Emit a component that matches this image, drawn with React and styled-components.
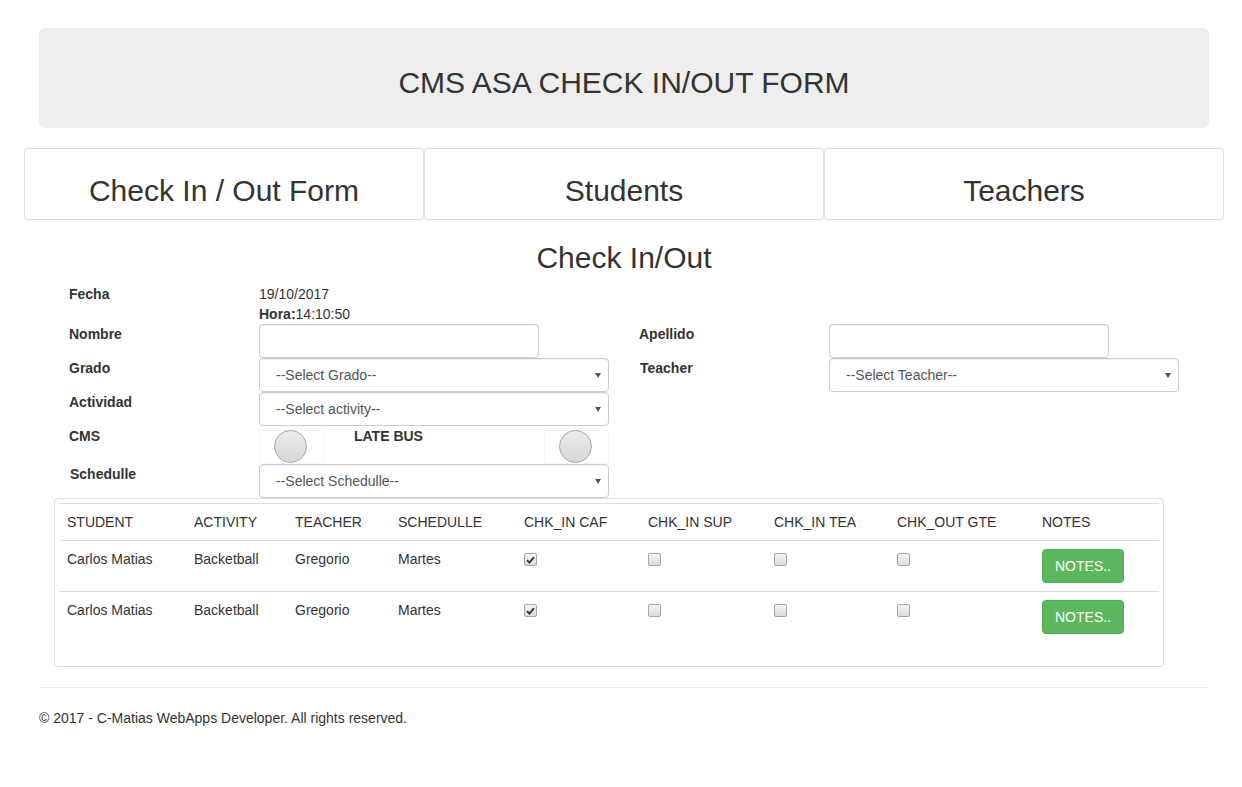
import React from 'react';
import styled, { createGlobalStyle } from 'styled-components';

const GlobalStyle = createGlobalStyle`
  html, body {
    margin: 0;
    padding: 0;
    background: #fff;
  }
  body {
    font-family: "Liberation Sans", Arial, Helvetica, sans-serif;
    font-size: 14px;
    line-height: 20px;
    color: #333;
  }
  * {
    box-sizing: border-box;
  }
`;

// Page container
const Page = styled.div`
  padding-top: 28px;
`;

const Container = styled.div`
  width: 1170px;
  margin-left: 39px;
`;

// Header banner
const Jumbotron = styled.div`
  background-color: #eee;
  border-radius: 6px;
  height: 100px;
  padding-top: 38px;
  text-align: center;
`;

const Title = styled.h1`
  margin: 0;
  font-size: 30px;
  line-height: 33px;
  font-weight: normal;
  color: #333;
`;

// Top tabs
const Tabs = styled.div`
  display: flex;
  margin: 20px -15px 0;
`;

const Tab = styled.a`
  width: 400px;
  height: 72px;
  padding-top: 25px;
  border: 1px solid #ddd;
  border-radius: 4px;
  text-align: center;
  font-size: 30px;
  line-height: 33px;
  color: #333;
  text-decoration: none;
`;

const Heading = styled.h2`
  margin: 21px 0 10px;
  font-size: 30px;
  line-height: 33px;
  font-weight: normal;
  text-align: center;
  color: #333;
`;

// Form grid
const Form = styled.div`
  display: grid;
  grid-template-columns: 190px 380px 190px 1fr;
  padding-left: 30px;
`;

const Label = styled.label`
  font-weight: bold;
  line-height: 20px;
  padding-left: ${({ shift }) => shift || 0}px;
`;

const Field = styled.div`
  min-height: 34px;
`;

const Hora = styled.div`
  b {
    font-weight: bold;
  }
`;

const TextInput = styled.input`
  display: block;
  width: 280px;
  height: 34px;
  padding: 6px 12px;
  border: 1px solid #ccc;
  border-radius: 4px;
  box-shadow: inset 0 1px 1px rgba(0, 0, 0, 0.075);
  font: inherit;
  color: #555;
`;

const SelectWrap = styled.div`
  position: relative;
  width: 350px;
  height: 34px;

  &::after {
    content: '';
    position: absolute;
    right: 8px;
    top: 15px;
    border-left: 3px solid transparent;
    border-right: 3px solid transparent;
    border-top: 5px solid #555;
    pointer-events: none;
  }
`;

const Select = styled.select`
  appearance: none;
  width: 100%;
  height: 34px;
  padding: 6px 12px 6px 16px;
  border: 1px solid #ccc;
  border-radius: 4px;
  background: #fff;
  box-shadow: inset 0 1px 1px rgba(0, 0, 0, 0.075);
  font: inherit;
  color: #555;
`;

// Toggle row
const ToggleRow = styled.div`
  display: flex;
  align-items: flex-start;
  width: 350px;
  margin-top: 4px;
  height: 34px;
`;

const Toggle = styled.div`
  position: relative;
  width: 65px;
  height: 34px;
  border: 1px solid #f6f6f6;
  margin-left: ${({ right }) => (right ? 'auto' : '0')};
`;

const Knob = styled.span`
  position: absolute;
  left: 14px;
  top: -1px;
  width: 33px;
  height: 33px;
  border-radius: 50%;
  border: 1px solid #a8a8a8;
  background: linear-gradient(#ececec, #d6d6d6);
`;

const LateBus = styled.span`
  font-weight: bold;
  margin-left: 30px;
  margin-top: -4px;
`;

// Table panel
const Panel = styled.div`
  width: 1110px;
  margin-left: 15px;
  padding: 4px;
  border: 1px solid #ddd;
  border-radius: 4px;
`;

const Table = styled.table`
  width: 100%;
  border-collapse: collapse;
  margin-bottom: 20px;
`;

const Cell = styled.td`
  padding: 8px;
  border-top: 1px solid #ddd;
  vertical-align: top;
  text-align: left;
  font-weight: normal;
  line-height: 20px;
  width: ${({ w }) => w}px;
`;

const Check = styled.span`
  display: inline-flex;
  align-items: center;
  justify-content: center;
  width: 13px;
  height: 13px;
  margin-top: 4px;
  vertical-align: top;
  border: 1px solid #a5a5a5;
  border-radius: 2px;
  background: linear-gradient(#f4f4f4, #dcdcdc);
`;

const NotesButton = styled.button`
  height: 34px;
  padding: 6px 12px;
  border: 1px solid #4cae4c;
  border-radius: 4px;
  background: #5cb85c;
  color: #fff;
  font: inherit;
  cursor: pointer;
`;

// Footer
const Rule = styled.hr`
  margin: 20px 0;
  border: 0;
  border-top: 1px solid #eee;
`;

const Footer = styled.footer`
  color: #333;
`;

const columns = [
  { name: 'STUDENT', w: 127 },
  { name: 'ACTIVITY', w: 101 },
  { name: 'TEACHER', w: 103 },
  { name: 'SCHEDULLE', w: 126 },
  { name: 'CHK_IN CAF', w: 124 },
  { name: 'CHK_IN SUP', w: 126 },
  { name: 'CHK_IN TEA', w: 123 },
  { name: 'CHK_OUT GTE', w: 145 },
  { name: 'NOTES', w: 125 },
];

const rows = [
  { student: 'Carlos Matias', activity: 'Backetball', teacher: 'Gregorio', schedule: 'Martes', checks: [true, false, false, false] },
  { student: 'Carlos Matias', activity: 'Backetball', teacher: 'Gregorio', schedule: 'Martes', checks: [true, false, false, false] },
];

function CheckBox({ checked }) {
  return (
    <Check>
      {checked && (
        <svg width="9" height="8" viewBox="0 0 9 8">
          <path d="M1 4.2 L3.4 6.6 L8 1.2" fill="none" stroke="#333" strokeWidth="1.8" />
        </svg>
      )}
    </Check>
  );
}

function Dropdown({ placeholder }) {
  return (
    <SelectWrap>
      <Select defaultValue="">
        <option value="">{placeholder}</option>
      </Select>
    </SelectWrap>
  );
}

export default function App() {
  return (
    <Page>
      <GlobalStyle />
      <Container>
        <Jumbotron>
          <Title>CMS ASA CHECK IN/OUT FORM</Title>
        </Jumbotron>

        <Tabs>
          <Tab href="#">Check In / Out Form</Tab>
          <Tab href="#">Students</Tab>
          <Tab href="#">Teachers</Tab>
        </Tabs>

        <Heading>Check In/Out</Heading>

        <Form>
          <Label>Fecha</Label>
          <Field>
            <div>19/10/2017</div>
            <Hora><b>Hora:</b>14:10:50</Hora>
          </Field>
          <div />
          <div />

          <Label>Nombre</Label>
          <Field><TextInput type="text" /></Field>
          <Label>Apellido</Label>
          <Field><TextInput type="text" /></Field>

          <Label>Grado</Label>
          <Field><Dropdown placeholder="--Select Grado--" /></Field>
          <Label shift={1}>Teacher</Label>
          <Field><Dropdown placeholder="--Select Teacher--" /></Field>

          <Label>Actividad</Label>
          <Field><Dropdown placeholder="--Select activity--" /></Field>
          <div />
          <div />

          <Label>CMS</Label>
          <Field>
            <ToggleRow>
              <Toggle><Knob /></Toggle>
              <LateBus>LATE BUS</LateBus>
              <Toggle right><Knob /></Toggle>
            </ToggleRow>
          </Field>
          <div />
          <div />

          <Label shift={1}>Schedulle</Label>
          <Field><Dropdown placeholder="--Select Schedulle--" /></Field>
          <div />
          <div />
        </Form>

        <Panel>
          <Table>
            <tbody>
              <tr>
                {columns.map((c) => (
                  <Cell as="th" key={c.name} w={c.w}>{c.name}</Cell>
                ))}
              </tr>
              {rows.map((r, i) => (
                <tr key={i}>
                  <Cell>{r.student}</Cell>
                  <Cell>{r.activity}</Cell>
                  <Cell>{r.teacher}</Cell>
                  <Cell>{r.schedule}</Cell>
                  {r.checks.map((c, j) => (
                    <Cell key={j}><CheckBox checked={c} /></Cell>
                  ))}
                  <Cell><NotesButton>NOTES..</NotesButton></Cell>
                </tr>
              ))}
            </tbody>
          </Table>
        </Panel>

        <Rule />
        <Footer>© 2017 - C-Matias WebApps Developer. All rights reserved.</Footer>
      </Container>
    </Page>
  );
}
